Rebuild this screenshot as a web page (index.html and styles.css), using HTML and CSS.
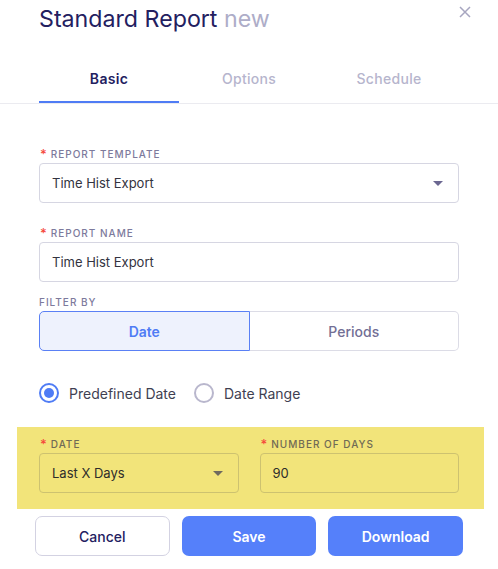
FILE: index.html
```html
<!DOCTYPE html>
<html lang="en">
<head>
    <meta charset="UTF-8">
    <meta name="viewport" content="width=device-width, initial-scale=1.0">
    <title>Standard Report</title>
    <link rel="stylesheet" href="styles.css">
</head>
<body>

<div class="modal">

    <!-- Header -->
    <div class="modal-header">
        <h1 class="title">Standard Report <span class="title-new">new</span></h1>
        <button class="close-btn" aria-label="Close">
            <svg width="12" height="12" viewBox="0 0 12 12">
                <path d="M1 1 L11 11 M11 1 L1 11" stroke="#a7a6c0" stroke-width="1.5" fill="none"/>
            </svg>
        </button>
    </div>

    <!-- Tabs -->
    <div class="tabs">
        <div class="tab active">Basic</div>
        <div class="tab">Options</div>
        <div class="tab">Schedule</div>
    </div>

    <!-- Form -->
    <div class="form">
        <div class="field-group">
            <label class="field-label required">Report Template</label>
            <div class="select">
                <span>Time Hist Export</span>
                <span class="caret"></span>
            </div>
        </div>

        <div class="field-group tight">
            <label class="field-label required">Report Name</label>
            <div class="input">Time Hist Export</div>
        </div>

        <div class="field-group">
            <label class="field-label">Filter By</label>
            <div class="segmented">
                <div class="segment active">Date</div>
                <div class="segment">Periods</div>
            </div>
        </div>

        <div class="radios">
            <div class="radio checked"><span class="radio-dot"></span>Predefined Date</div>
            <div class="radio"><span class="radio-dot"></span>Date Range</div>
        </div>
    </div>

    <!-- Highlighted date row -->
    <div class="highlight">
        <div class="field-row">
            <div>
                <label class="field-label required">Date</label>
                <div class="select">
                    <span>Last X Days</span>
                    <span class="caret"></span>
                </div>
            </div>
            <div>
                <label class="field-label required">Number of Days</label>
                <div class="input">90</div>
            </div>
        </div>
    </div>

    <!-- Footer buttons -->
    <div class="actions">
        <button class="btn btn-cancel">Cancel</button>
        <button class="btn btn-primary">Save</button>
        <button class="btn btn-primary">Download</button>
    </div>

</div>

</body>
</html>
```

FILE: styles.css
```css
body {
    margin: 0;
    font-family: "Inter", "Noto Sans", sans-serif;
    background-color: #fff;
    color: #3a3a4c;
}

.modal {
    width: 498px;
}

.modal-header {
    display: flex;
    justify-content: space-between;
    align-items: flex-start;
    padding: 4px 27px 0 39px;
    height: 52px;
    box-sizing: border-box;
}

.title {
    margin: 0;
    font-size: 23.2px;
    font-weight: 400;
    line-height: 30px;
    color: #23205f;
}

.title-new {
    color: #aeadc8;
}

.close-btn {
    background: none;
    border: none;
    padding: 2px 0 0;
    cursor: pointer;
}

.tabs {
    display: flex;
    padding-left: 39px;
    border-bottom: 1px solid #ebebf0;
}

.tab {
    width: 140px;
    text-align: center;
    font-size: 14px;
    font-weight: 500;
    line-height: 20px;
    padding: 17px 0 12px;
    color: #b6b5cd;
    border-bottom: 2px solid transparent;
    letter-spacing: 0.3px;
}

.tab.active {
    color: #23205f;
    font-weight: 600;
    border-bottom-color: #4f7cf5;
}

.form {
    padding: 43px 39px 0;
}

.field-group {
    margin-bottom: 23px;
}

.field-group.tight {
    margin-bottom: 13px;
}

.field-label {
    display: flex;
    align-items: center;
    height: 14px;
    font-size: 10px;
    font-weight: 500;
    letter-spacing: 1px;
    text-transform: uppercase;
    color: #7d7a9c;
    margin-bottom: 2px;
}

.field-label.required::before {
    content: "*";
    color: #f5483b;
    font-size: 13px;
    line-height: 14px;
    margin: 0 4px 0 1px;
    letter-spacing: 0;
}

.select,
.input {
    display: flex;
    align-items: center;
    justify-content: space-between;
    height: 40px;
    box-sizing: border-box;
    padding: 0 15px 0 12px;
    border: 1px solid #d6d6e2;
    border-radius: 4px;
    font-size: 13px;
    color: #333340;
}

.caret {
    width: 0;
    height: 0;
    border-left: 5px solid transparent;
    border-right: 5px solid transparent;
    border-top: 5px solid #6b6791;
}

.segmented {
    display: flex;
    height: 40px;
}

.segment {
    flex: 1;
    display: flex;
    align-items: center;
    justify-content: center;
    font-size: 14px;
    font-weight: 500;
    color: #736f95;
    border: 1px solid #dcdce6;
    border-left: none;
    border-radius: 0 5px 5px 0;
}

.segment.active {
    color: #4f7cf5;
    font-weight: 600;
    background-color: #eef2fd;
    border: 1px solid #5a80f5;
    border-radius: 5px 0 0 5px;
}

.radios {
    display: flex;
    gap: 18px;
    margin-top: 32px;
}

.radio {
    display: flex;
    align-items: center;
    height: 20px;
    font-size: 14px;
    color: #3f3f52;
}

.radio-dot {
    width: 20px;
    height: 20px;
    box-sizing: border-box;
    border: 2px solid #b9b7cd;
    border-radius: 50%;
    margin-right: 10px;
    position: relative;
}

.radio.checked .radio-dot {
    border-color: #4f7cf5;
}

.radio.checked .radio-dot::after {
    content: "";
    position: absolute;
    top: 3px;
    left: 3px;
    width: 10px;
    height: 10px;
    border-radius: 50%;
    background-color: #4f7cf5;
}

.highlight {
    margin: 24px 14px 0 17px;
    padding: 10px 25px 16px 22px;
    background-color: #f2e47a;
}

.field-row {
    display: grid;
    grid-template-columns: 1fr 1fr;
    gap: 21px;
}

.highlight .field-label {
    color: #706a55;
}

.highlight .select,
.highlight .input {
    border-color: #cdc270;
    color: #2e2d2a;
}

.highlight .caret {
    border-top-color: #6f6a5e;
}

.actions {
    display: grid;
    grid-template-columns: 1fr 1fr 1fr;
    gap: 12px;
    padding: 7px 35px 0;
}

.btn {
    height: 40px;
    border-radius: 7px;
    font-family: inherit;
    font-size: 14px;
    cursor: pointer;
}

.btn-cancel {
    background-color: #fff;
    border: 1px solid #d3d2e2;
    color: #23205f;
    font-weight: 500;
}

.btn-primary {
    background-color: #5580fa;
    border: none;
    color: #fff;
    font-weight: 600;
}

.btn-primary:hover {
    background-color: #446ff0;
}
```
